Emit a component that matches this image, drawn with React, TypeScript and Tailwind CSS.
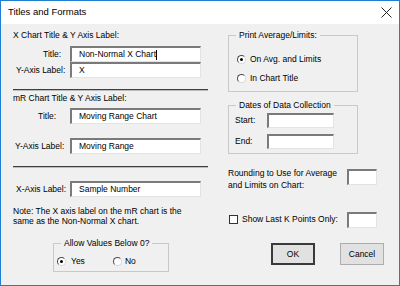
import React from 'react';

const font = { fontFamily: '"Liberation Sans", Arial, sans-serif' };

// Sunken Win32-style edit box
const Field: React.FC<{ value?: string; caret?: boolean; className?: string }> = ({ value, caret, className }) => (
    <div
        className={`flex items-center bg-white border-t-2 border-l-2 border-b border-r border-t-[#7a7a7a] border-l-[#7a7a7a] border-b-[#e3e3e3] border-r-[#e3e3e3] pl-[7px] text-[8.5px] leading-none text-black ${className ?? ''}`}
    >
        {value}
        {caret && <span className="inline-block w-px h-[10px] bg-black" />}
    </div>
);

const Radio: React.FC<{ checked?: boolean }> = ({ checked }) => (
    <span className="flex items-center justify-center w-[9px] h-[9px] rounded-full bg-white border border-t-[#4a4a4a] border-l-[#4a4a4a] border-b-[#d8d8d8] border-r-[#d8d8d8] shrink-0">
        {checked && <span className="w-[3px] h-[3px] rounded-full bg-black" />}
    </span>
);

const Group: React.FC<{ label: string; className?: string; children?: React.ReactNode }> = ({ label, className, children }) => (
    <div className={`relative border border-[#c9c9c9] ${className ?? ''}`}>
        <span className="absolute -top-[7px] left-[7px] px-[3px] bg-[#f0f0f0] text-[8.5px] leading-[12px]">{label}</span>
        {children}
    </div>
);

const Separator = ({ className }: { className?: string }) => (
    <div className={`h-[2px] border-t border-[#3f3f3f] border-b border-b-[#bdbdbd] ${className ?? ''}`} />
);

export default function App() {
    return (
        <div className="w-[400px] h-[286px] flex flex-col border border-[#1c7fd2] bg-[#f0f0f0] text-black overflow-hidden" style={font}>
            {/* title bar */}
            <div className="h-[23px] bg-white flex items-center justify-between pl-[7px] pr-[7px] shrink-0">
                <span className="text-[9.5px]">Titles and Formats</span>
                <svg width="11" height="11" viewBox="0 0 11 11">
                    <path d="M0.5 0.5 L10.5 10.5 M10.5 0.5 L0.5 10.5" stroke="#222" strokeWidth="1" fill="none" />
                </svg>
            </div>

            <div className="flex flex-1 pl-[12px] text-[8.5px]">
                {/* left column */}
                <div className="w-[195px] flex flex-col">
                    <div className="mt-[5px] h-[12px] leading-[12px]">X Chart Title &amp; Y Axis Label:</div>
                    <div className="mt-[5px] flex items-center h-[16px]">
                        <span className="w-[57px] pl-[30px]">Title:</span>
                        <Field value="Non-Normal X Chart" caret className="w-[131px] h-[16px]" />
                    </div>
                    <div className="flex items-center h-[16px]">
                        <span className="w-[57px] pl-[3px]">Y-Axis Label:</span>
                        <Field value="X" className="w-[131px] h-[16px]" />
                    </div>
                    <Separator className="mt-[11px]" />

                    <div className="mt-[1px] h-[12px] leading-[12px]">mR Chart Title &amp; Y Axis Label:</div>
                    <div className="mt-[4px] flex items-center h-[16px]">
                        <span className="w-[57px] pl-[25px]">Title:</span>
                        <Field value="Moving Range Chart" className="w-[131px] h-[16px]" />
                    </div>
                    <div className="mt-[14px] flex items-center h-[16px]">
                        <span className="w-[57px] pl-[2px]">Y-Axis Label:</span>
                        <Field value="Moving Range" className="w-[131px] h-[16px]" />
                    </div>
                    <Separator className="mt-[12px]" />

                    <div className="mt-[13px] flex items-center h-[16px]">
                        <span className="w-[57px] pl-[3px]">X-Axis Label:</span>
                        <Field value="Sample Number" className="w-[131px] h-[16px]" />
                    </div>

                    <div className="mt-[9px] leading-[10px]">
                        Note: The X axis label on the mR chart is the
                        <br />
                        same as the Non-Normal X chart.
                    </div>

                    <Group label="Allow Values Below 0?" className="mt-[17px] ml-[40px] w-[116px] h-[29px]">
                        <div className="flex items-center mt-[11px] pl-[3px]">
                            <Radio checked />
                            <span className="ml-[5px]">Yes</span>
                            <span className="ml-[28px]">
                                <Radio />
                            </span>
                            <span className="ml-[3px]">No</span>
                        </div>
                    </Group>
                </div>

                {/* right column */}
                <div className="ml-[20px] w-[156px] flex flex-col">
                    <Group label="Print Average/Limits:" className="mt-[11px] w-[130px] h-[57px]">
                        <div className="flex items-center mt-[17px] pl-[8px] h-[12px]">
                            <Radio checked />
                            <span className="ml-[4px]">On Avg. and Limits</span>
                        </div>
                        <div className="flex items-center mt-[7px] pl-[8px] h-[12px]">
                            <Radio />
                            <span className="ml-[4px]">In Chart Title</span>
                        </div>
                    </Group>

                    <Group label="Dates of Data Collection" className="mt-[13px] w-[130px] h-[49px]">
                        <div className="flex items-center mt-[7px] pl-[6px] h-[15px]">
                            <span className="w-[32px]">Start:</span>
                            <Field className="w-[67px] h-[15px]" />
                        </div>
                        <div className="flex items-center mt-[6px] pl-[6px] h-[15px]">
                            <span className="w-[32px]">End:</span>
                            <Field className="w-[67px] h-[15px]" />
                        </div>
                    </Group>

                    <div className="mt-[13px] flex items-start">
                        <div className="flex-1 leading-[12px]">
                            Rounding to Use for Average
                            <br />
                            and Limits on Chart:
                        </div>
                        <Field className="mt-[2px] mr-[7px] w-[30px] h-[16px]" />
                    </div>

                    <div className="mt-[21px] flex items-center h-[15px]">
                        <span className="ml-[1px] w-[9px] h-[9px] bg-white border border-[#333]" />
                        <span className="ml-[4px] flex-1">Show Last K Points Only:</span>
                        <Field className="mr-[7px] w-[30px] h-[16px]" />
                    </div>

                    <div className="mt-[16px] flex justify-end gap-[25px]">
                        <button className="w-[44px] h-[22px] bg-[#e1e1e1] border-2 border-[#3a3a3a] text-[8.5px]">OK</button>
                        <button className="w-[44px] h-[22px] bg-[#e1e1e1] border border-[#adadad] text-[8.5px]">Cancel</button>
                    </div>
                </div>
            </div>
        </div>
    );
}
